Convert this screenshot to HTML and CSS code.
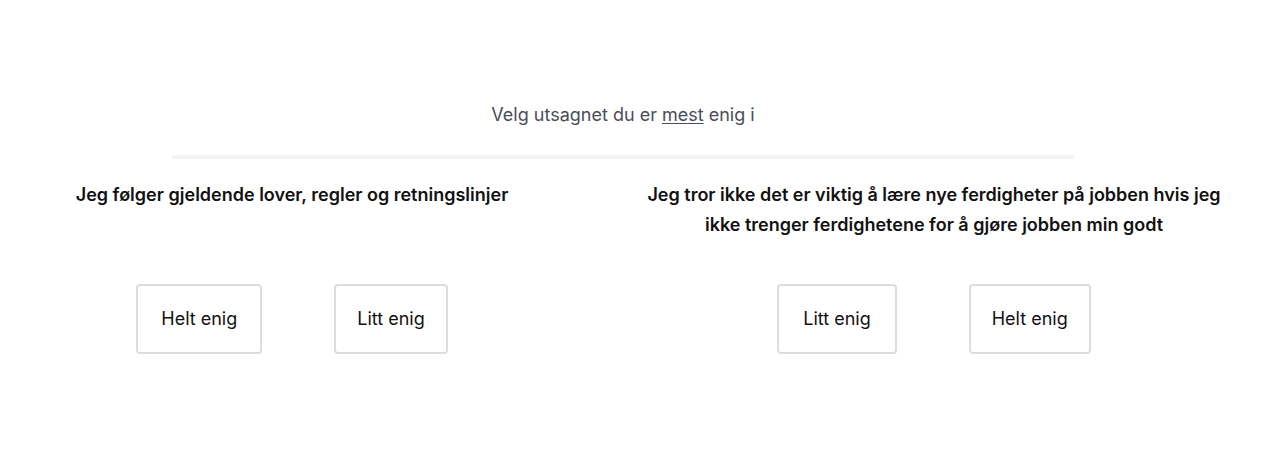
FILE: index.html
```html
<!DOCTYPE html>
<html lang="no">
<head>
    <meta charset="UTF-8">
    <meta name="viewport" content="width=device-width, initial-scale=1.0">
    <title>Velg utsagn</title>
    <link rel="stylesheet" href="styles.css">
</head>
<body>
    <div class="intro">
        <p class="prompt">Velg utsagnet du er <u>mest</u> enig i</p>
        <div class="divider"></div>
    </div>

    <div class="choices">
        <h2 class="statement">Jeg følger gjeldende lover, regler og retningslinjer</h2>
        <h2 class="statement">Jeg tror ikke det er viktig å lære nye ferdigheter på jobben hvis jeg ikke trenger ferdighetene for å gjøre jobben min godt</h2>

        <div class="options">
            <button type="button" class="option option-wide">Helt enig</button>
            <button type="button" class="option">Litt enig</button>
        </div>
        <div class="options">
            <button type="button" class="option option-wider">Litt enig</button>
            <button type="button" class="option">Helt enig</button>
        </div>
    </div>
</body>
</html>
```

FILE: styles.css
```css
:root {
    --text-muted: #4a4d57;
    --text-dark: #111111;
    --line-color: #f3f3f3;
    --border-color: #dddddd;
}

body {
    margin: 0;
    font-family: 'Inter', 'Noto Sans', sans-serif;
    color: var(--text-dark);
    background: #ffffff;
}

.intro {
    width: 902px;
    margin-left: 172px;
    padding-top: 103px;
    text-align: center;
}

.prompt {
    margin: 0;
    font-size: 18px;
    line-height: 24px;
    color: var(--text-muted);
}

.prompt u {
    text-underline-offset: 2px;
}

.divider {
    height: 4px;
    margin-top: 28px;
    background: var(--line-color);
}

/* two statements side by side, buttons below each */
.choices {
    display: grid;
    grid-template-columns: 584px 584px;
    column-gap: 58px;
    row-gap: 44px;
    margin-top: 21px;
}

.statement {
    margin: 0;
    font-size: 18px;
    font-weight: 600;
    line-height: 30px;
    text-align: center;
}

.options {
    display: flex;
    justify-content: center;
    gap: 72px;
}

.option {
    font-family: inherit;
    font-size: 18px;
    line-height: 22px;
    color: var(--text-dark);
    background: #ffffff;
    border: 2px solid var(--border-color);
    border-radius: 4px;
    padding: 22px 21px;
    cursor: pointer;
}

.option-wide {
    padding: 22px 23px;
}

.option-wider {
    padding: 22px 24px;
}
```
